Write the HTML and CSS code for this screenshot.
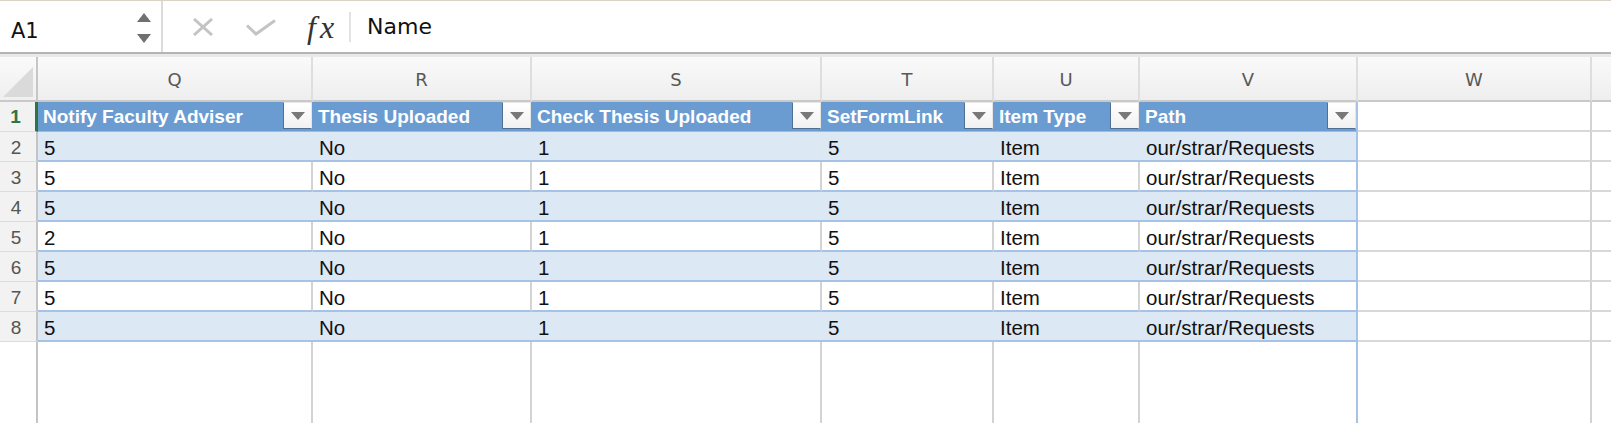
FILE: index.html
```html
<!DOCTYPE html>
<html lang="en">
<head>
<meta charset="utf-8">
<title>Sheet</title>
<link rel="stylesheet" href="styles.css">
</head>
<body>
<div class="excel">
  <div class="formula-bar">
    <div class="name-box">
      <span class="name-ref">A1</span>
      <div class="spinner"><span class="tri-up"></span><span class="tri-down"></span></div>
    </div>
    <div class="fx-zone">
      <svg class="icon-x" width="22" height="18" viewBox="0 0 22 18"><path d="M2 1 L20 17 M20 1 L2 17" stroke="#c4c4c4" stroke-width="3" fill="none"/></svg>
      <svg class="icon-check" width="30" height="17" viewBox="0 0 30 17"><polyline points="1,6.5 10,15 29,1.5" stroke="#c4c4c4" stroke-width="3" fill="none"/></svg>
      <span class="fx">fx</span>
      <span class="fx-sep"></span>
      <span class="formula">Name</span>
    </div>
  </div>
  <div class="bar-divider"></div>
  <div class="grid">
    <div class="corner"><span class="corner-tri"></span></div>
    <div class="ch">Q</div><div class="ch">R</div><div class="ch">S</div><div class="ch">T</div><div class="ch">U</div><div class="ch">V</div><div class="ch">W</div><div class="ch ch-last"></div>

    <div class="rh sel">1</div>
    <div class="th"><span>Notify Faculty Adviser</span><span class="dd"><span class="dd-tri"></span></span></div>
    <div class="th"><span>Thesis Uploaded</span><span class="dd"><span class="dd-tri"></span></span></div>
    <div class="th"><span>Check Thesis Uploaded</span><span class="dd"><span class="dd-tri"></span></span></div>
    <div class="th"><span>SetFormLink</span><span class="dd"><span class="dd-tri"></span></span></div>
    <div class="th"><span>Item Type</span><span class="dd"><span class="dd-tri"></span></span></div>
    <div class="th th-last"><span>Path</span><span class="dd"><span class="dd-tri"></span></span></div>
    <div class="gc"></div><div class="gc gc-last"></div>

    <div class="rh">2</div>
    <div class="td band">5</div><div class="td band">No</div><div class="td band">1</div><div class="td band">5</div><div class="td band">Item</div><div class="td band td-last">our/strar/Requests</div>
    <div class="gc"></div><div class="gc gc-last"></div>

    <div class="rh">3</div>
    <div class="td plain">5</div><div class="td plain">No</div><div class="td plain">1</div><div class="td plain">5</div><div class="td plain">Item</div><div class="td plain td-last">our/strar/Requests</div>
    <div class="gc"></div><div class="gc gc-last"></div>

    <div class="rh">4</div>
    <div class="td band">5</div><div class="td band">No</div><div class="td band">1</div><div class="td band">5</div><div class="td band">Item</div><div class="td band td-last">our/strar/Requests</div>
    <div class="gc"></div><div class="gc gc-last"></div>

    <div class="rh">5</div>
    <div class="td plain">2</div><div class="td plain">No</div><div class="td plain">1</div><div class="td plain">5</div><div class="td plain">Item</div><div class="td plain td-last">our/strar/Requests</div>
    <div class="gc"></div><div class="gc gc-last"></div>

    <div class="rh">6</div>
    <div class="td band">5</div><div class="td band">No</div><div class="td band">1</div><div class="td band">5</div><div class="td band">Item</div><div class="td band td-last">our/strar/Requests</div>
    <div class="gc"></div><div class="gc gc-last"></div>

    <div class="rh">7</div>
    <div class="td plain">5</div><div class="td plain">No</div><div class="td plain">1</div><div class="td plain">5</div><div class="td plain">Item</div><div class="td plain td-last">our/strar/Requests</div>
    <div class="gc"></div><div class="gc gc-last"></div>

    <div class="rh">8</div>
    <div class="td band">5</div><div class="td band">No</div><div class="td band">1</div><div class="td band">5</div><div class="td band">Item</div><div class="td band td-last">our/strar/Requests</div>
    <div class="gc"></div><div class="gc gc-last"></div>

    <div class="fl fl-rh"></div>
    <div class="fl"></div><div class="fl"></div><div class="fl"></div><div class="fl"></div><div class="fl"></div><div class="fl fl-v"></div><div class="fl"></div><div class="fl fl-last"></div>
  </div>
</div>
</body>
</html>
```

FILE: styles.css
```css
* { box-sizing: border-box; }
html, body { margin: 0; padding: 0; background: #ffffff; }
body { width: 1611px; height: 423px; overflow: hidden; }

.excel { display: flex; flex-direction: column; height: 423px; }

.formula-bar {
  height: 52px;
  border-top: 1px solid #d8d3c4;
  display: flex;
  background: #ffffff;
}
.name-box {
  width: 163px;
  border-right: 2px solid #dcdcdc;
  display: flex;
  align-items: center;
  justify-content: space-between;
  padding: 0 10px 0 11px;
}
.name-ref {
  font-family: "DejaVu Sans", sans-serif;
  font-size: 21px;
  color: #111;
  padding-top: 9px;
}
.spinner {
  display: flex;
  flex-direction: column;
  gap: 12px;
  padding-top: 2px;
}
.tri-up {
  width: 0; height: 0;
  border-left: 7px solid transparent;
  border-right: 7px solid transparent;
  border-bottom: 9px solid #707070;
}
.tri-down {
  width: 0; height: 0;
  border-left: 7px solid transparent;
  border-right: 7px solid transparent;
  border-top: 9px solid #707070;
}
.fx-zone {
  flex: 1;
  display: flex;
  align-items: center;
  padding-left: 29px;
}
.icon-check { margin-left: 32px; margin-top: 2px; }
.fx {
  font-family: "Liberation Serif", serif;
  font-style: italic;
  font-size: 32px;
  letter-spacing: 4px;
  color: #333333;
  margin-left: 31px;
  line-height: 1;
}
.fx-sep {
  width: 2px;
  height: 30px;
  background: #e2e2e2;
  margin-left: 11px;
}
.formula {
  font-family: "DejaVu Sans", sans-serif;
  font-size: 22px;
  color: #111;
  margin-left: 16px;
  margin-top: -1px;
}

.bar-divider {
  height: 5px;
  border-top: 2px solid #b4b4b4;
  background: #e9e9e9;
}

.grid {
  flex: 1;
  display: grid;
  grid-template-columns: 38px 275px 219px 290px 172px 146px 218px 234px 1fr;
  grid-template-rows: 45px repeat(8, 30px) 1fr;
}

.corner {
  background: linear-gradient(#fafafa, #efefef);
  border-right: 2px solid #c6c6c6;
  border-bottom: 2px solid #c9c9c9;
  display: flex;
  align-items: flex-end;
  justify-content: flex-end;
  padding: 0 3px 3px 0;
}
.corner-tri {
  width: 0; height: 0;
  border-left: 30px solid transparent;
  border-bottom: 30px solid #dadada;
}
.ch {
  background: linear-gradient(#fafafa, #eeeeee);
  border-right: 2px solid #dedede;
  border-bottom: 2px solid #c9c9c9;
  display: flex;
  align-items: center;
  justify-content: center;
  padding-top: 2px;
  font-family: "DejaVu Sans", sans-serif;
  font-size: 18px;
  color: #585858;
}
.ch-last { border-right: none; }

.rh {
  background: #f2f2f2;
  border-right: 2px solid #c4c4c4;
  border-bottom: 1px solid #dcdcdc;
  display: flex;
  align-items: center;
  justify-content: center;
  padding: 3px 4px 0 0;
  font-family: "Liberation Sans", sans-serif;
  font-size: 19px;
  color: #555;
}
.rh.sel {
  color: #2f7445;
  font-weight: bold;
  border-right: 3px solid #2f7445;
  padding-top: 0;
}

.th {
  background: #6a9bd1;
  color: #ffffff;
  font-family: "Liberation Sans", sans-serif;
  font-weight: bold;
  font-size: 19px;
  display: flex;
  justify-content: space-between;
  align-items: center;
  padding-left: 5px;
  border-bottom: 1px solid #9dbbe2;
}
.th-last { border-right: 2px solid #a6c3e6; }
.dd {
  align-self: flex-start;
  width: 29px;
  height: 27px;
  margin-right: 1px;
  background: linear-gradient(#ffffff, #f1f1f1);
  border: 1px solid #e6e6e6;
  border-left-color: #4f6f93;
  border-bottom-color: #4f6f93;
  display: flex;
  align-items: center;
  justify-content: center;
}
.th-last .dd { margin-right: 0; }
.dd-tri {
  width: 0; height: 0;
  border-left: 7px solid transparent;
  border-right: 7px solid transparent;
  border-top: 8px solid #787878;
}

.td {
  font-family: "Liberation Sans", sans-serif;
  font-size: 20.5px;
  color: #111;
  display: flex;
  align-items: center;
  padding: 3px 0 0 6px;
  border-bottom: 2px solid #a6c3e6;
  white-space: nowrap;
  overflow: hidden;
}
.band { background: #dde8f5; }
.plain { background: #ffffff; border-right: 2px solid #d3d3d3; }
.td-last { border-right: 2px solid #a6c3e6; }

.gc {
  background: #ffffff;
  border-right: 2px solid #d3d3d3;
  border-bottom: 2px solid #d8d8d8;
}
.gc-last { border-right: none; }

.fl { background: #ffffff; border-right: 2px solid #d3d3d3; }
.fl-rh { border-right: 2px solid #c4c4c4; }
.fl-v { border-right: 2px solid #a6c3e6; }
.fl-last { border-right: none; }
```
